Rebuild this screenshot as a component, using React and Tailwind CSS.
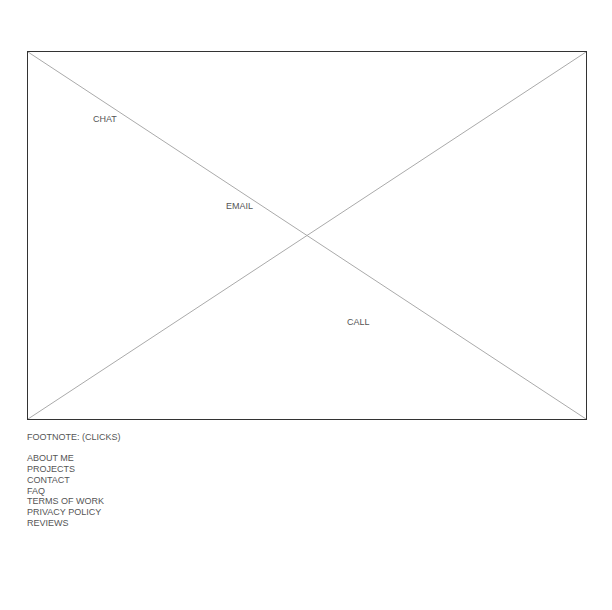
export default function App() {
  const links = ["ABOUT ME", "PROJECTS", "CONTACT", "FAQ", "TERMS OF WORK", "PRIVACY POLICY", "REVIEWS"];
  return (
    <div className="w-[612px] h-[610px] bg-white pt-[51px] pl-[27px] text-[9px] leading-[1.2] text-[#555]" style={{ fontFamily: '"Liberation Sans", Arial, sans-serif' }}>
      <div className="relative w-[560px] h-[369px] border border-[#333]">
        <svg className="absolute inset-0" width="558" height="367" viewBox="0 0 558 367">
          <line x1="0" y1="0" x2="558" y2="367" stroke="#aaa" strokeWidth="1" />
          <line x1="558" y1="0" x2="0" y2="367" stroke="#aaa" strokeWidth="1" />
        </svg>
        <span className="absolute left-[65px] top-[62px]">CHAT</span>
        <span className="absolute left-[198px] top-[149px]">EMAIL</span>
        <span className="absolute left-[319px] top-[265px]">CALL</span>
      </div>
      <div className="mt-[12px]">FOOTNOTE: (CLICKS)</div>
      <ul className="mt-[10.5px]">
        {links.map((l) => (
          <li key={l}>{l}</li>
        ))}
      </ul>
    </div>
  );
}
